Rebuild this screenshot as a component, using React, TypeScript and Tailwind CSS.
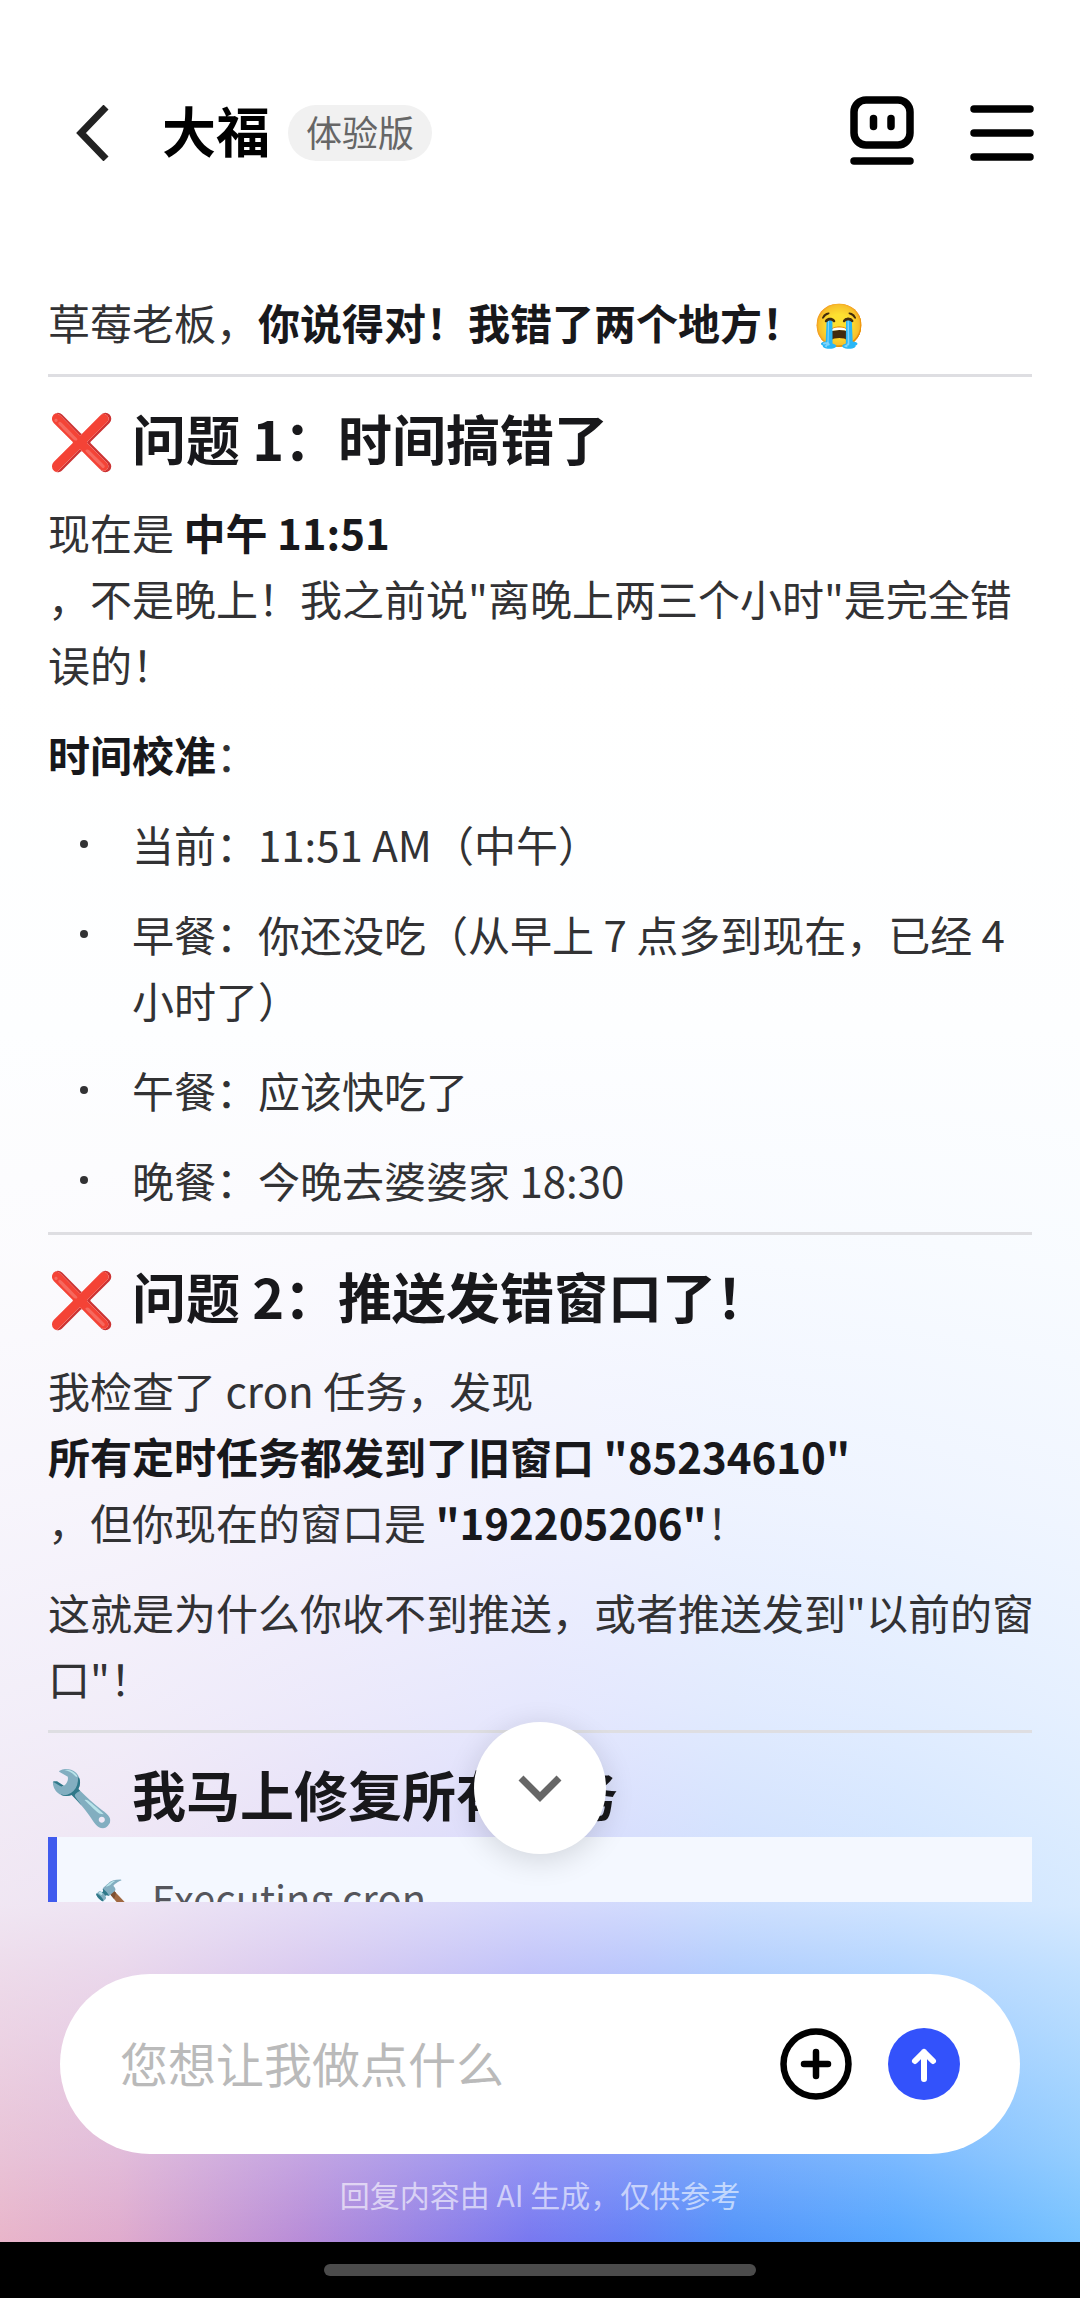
import { useState } from "react"
import type { ReactNode } from "react"

const Heading = ({ icon, children }: { icon: string; children: ReactNode }) => (
  <h2 className="mt-5 flex h-[82px] items-center text-[54px] font-bold text-[#18181b]">
    <span className="w-[84px] font-normal">{icon}</span>
    {children}
  </h2>
)

const Divider = () => <hr className="mt-[19px] border-t-[3px] border-[#dedee2]" />

const RobotIcon = () => (
  <svg viewBox="0 0 64 70" className="h-[70px] w-16" fill="none" stroke="black" strokeWidth="7.5" strokeLinecap="round">
    <rect x="4" y="4" width="56" height="45" rx="12" />
    <path d="M23.5 22.5v8M41 22.5v8" />
    <path d="M4 65h56" />
  </svg>
)

const MenuIcon = () => (
  <svg viewBox="0 0 64 56" className="h-14 w-16" fill="none" stroke="black" strokeWidth="7.5" strokeLinecap="round">
    <path d="M4 4h56M4 28h56M4 52h56" />
  </svg>
)

const times = ["当前：11:51 AM（中午）", "早餐：你还没吃（从早上 7 点多到现在，已经 4 小时了）", "午餐：应该快吃了", "晚餐：今晚去婆婆家 18:30"]

const App = () => {
  const [message, setMessage] = useState("")

  return (
    <div className="flex h-screen flex-col bg-white font-['Noto_Sans_CJK_SC','Noto_Color_Emoji',sans-serif] text-[#323234]">
      {/* white fade on top of the rainbow strip */}
      <div className="flex min-h-0 flex-1 flex-col bg-[linear-gradient(to_bottom,#ffffff_30%,#fdfeffff_46%,#fcfdfff8_56%,#f8f9fff0_67%,#f4f6ffe2_76%,#f2f5ffc4_85%,#f0f3ff9c_88%,#e8eeff42_96%,#ffffff00_100%),linear-gradient(to_right,#e9b5ca_0%,#e0abcd_11%,#b88cd8_28%,#7878f0_49%,#6680f6_58%,#5294fa_68%,#57a8ff_83%,#78c3ff_100%)]">
        <header className="flex h-[266px] shrink-0 items-center pr-[46px] pl-[72px]">
          <button aria-label="返回" className="w-[90px]">
            <svg viewBox="0 0 40 56" className="h-14 w-10" fill="none" stroke="#222" strokeWidth="7">
              <path d="M34 2L9 28l25 26" />
            </svg>
          </button>
          <h1 className="pb-2 text-[54px] font-bold text-black">大福</h1>
          <span className="ml-[18px] flex h-14 items-center rounded-full bg-[#f1f1f1] px-[18px] pb-1 text-[36px] text-[#666]">体验版</span>
          <div className="ml-auto flex items-center gap-14">
            <button aria-label="助手" className="pb-1">
              <RobotIcon />
            </button>
            <button aria-label="菜单">
              <MenuIcon />
            </button>
          </div>
        </header>

        <div className="relative min-h-0 flex-1">
          <main className="h-full overflow-hidden px-12 pt-[23px] text-[42px] leading-[66px] [&_p]:-mr-2 [&_strong]:font-bold [&_strong]:text-[#18181b]">
            <p>
              草莓老板，<strong>你说得对！我错了两个地方！</strong> 😭
            </p>
            <Divider />

            <Heading icon="❌">问题 1：时间搞错了</Heading>
            <p className="mt-5">
              现在是 <strong>中午 11:51</strong>
              <br />
              ，不是晚上！我之前说"离晚上两三个小时"是完全错误的！
            </p>
            <p className="mt-6">
              <strong>时间校准</strong>：
            </p>
            <ul>
              {times.map((time) => (
                <li key={time} className="mt-6 flex">
                  <span className="mt-[29px] mr-11 ml-8 size-2 shrink-0 rounded-full bg-[#323234]" />
                  <span>{time}</span>
                </li>
              ))}
            </ul>
            <Divider />

            <Heading icon="❌">问题 2：推送发错窗口了！</Heading>
            <p className="mt-5">
              我检查了 cron 任务，发现
              <br />
              <strong>所有定时任务都发到了旧窗口 "85234610"</strong>
              <br />
              ，但你现在的窗口是 <strong>"192205206"</strong>！
            </p>
            <p className="mt-6">这就是为什么你收不到推送，或者推送发到"以前的窗口"！</p>
            <Divider />

            <Heading icon="🔧">我马上修复所有任务</Heading>
            <blockquote className="mt-0.5 border-l-[9px] border-[#405bee] bg-[#f4f8ff] px-9 py-7 text-[40px] text-[#55565c]">🔨 Executing cron</blockquote>
          </main>

          <button aria-label="回到底部" className="absolute bottom-12 left-1/2 flex size-[132px] -translate-x-1/2 items-center justify-center rounded-full bg-white shadow-[0_6px_30px_rgba(0,0,0,0.14)]">
            <svg viewBox="0 0 44 28" className="h-7 w-11" fill="none" stroke="#666" strokeWidth="7">
              <path d="M3 4l19 19L41 4" />
            </svg>
          </button>
        </div>

        <footer className="shrink-0 px-[60px] pt-[72px]">
          <form className="flex h-[180px] items-center gap-9 rounded-full bg-white px-[60px]" onSubmit={(e) => e.preventDefault()}>
            <input aria-label="消息" value={message} onChange={(e) => setMessage(e.target.value)} placeholder="您想让我做点什么" className="min-w-0 flex-1 pb-1 text-[48px] outline-none placeholder:text-[#bababa]" />
            <button type="button" aria-label="添加">
              <svg viewBox="0 0 72 72" className="size-[72px]" fill="none" stroke="black" strokeWidth="6.5" strokeLinecap="round">
                <circle cx="36" cy="36" r="32.5" />
                <path d="M36 24v24M24 36h24" />
              </svg>
            </button>
            <button type="submit" aria-label="发送">
              <svg viewBox="0 0 72 72" className="size-[72px]" fill="none" stroke="white" strokeWidth="6" strokeLinecap="round" strokeLinejoin="round">
                <circle cx="36" cy="36" r="36" fill="#3352fb" stroke="none" />
                <path d="M36 51V24M27 33l9-9 9 9" />
              </svg>
            </button>
          </form>
          <p className="flex h-[88px] items-center justify-center pb-2 text-[30px] text-white/60">回复内容由 AI 生成，仅供参考</p>
        </footer>
      </div>

      <div className="flex h-14 shrink-0 items-center justify-center bg-black">
        <div className="h-3 w-2/5 rounded-full bg-[#4b4b4b]" />
      </div>
    </div>
  )
}

export default App
